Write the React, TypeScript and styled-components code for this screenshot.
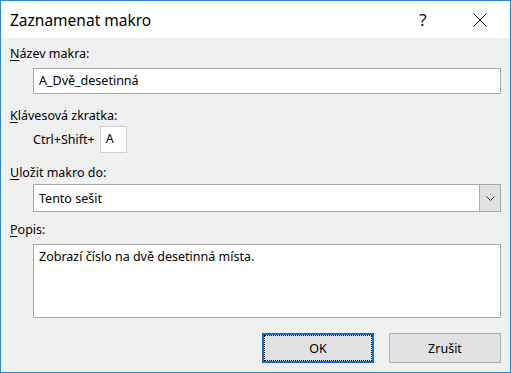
import styled, { createGlobalStyle } from "styled-components";

const GlobalStyle = createGlobalStyle`
  html, body {
    margin: 0;
    padding: 0;
    background: #f0f0f0;
  }
  body {
    font-family: "Noto Sans", "Open Sans", sans-serif;
    font-size: 12.5px;
    color: #000;
  }
`;

const Window = styled.div`
  width: 511px;
  height: 373px;
  box-sizing: border-box;
  border: 1px solid #2b88d8;
  background: #f0f0f0;
  display: flex;
  flex-direction: column;
`;

const TitleBar = styled.div`
  height: 37px;
  background: #fff;
  display: flex;
  align-items: center;
  padding: 0 7px 0 9px;
  flex-shrink: 0;
`;

const Title = styled.div`
  flex: 1;
  font-size: 15.5px;
  color: #000;
  margin-top: 1px;
`;

const TitleButton = styled.div<{ $width: number }>`
  width: ${({ $width }) => $width}px;
  height: 37px;
  display: flex;
  align-items: center;
  justify-content: center;
  font-size: 17px;
  color: #111;
`;

const Body = styled.div`
  flex: 1;
  display: flex;
  flex-direction: column;
  padding: 8px 9px 0 9px;
`;

const Label = styled.div<{ $top: number }>`
  height: 16px;
  line-height: 16px;
  margin-top: ${({ $top }) => $top}px;
  u {
    text-decoration: underline;
    text-underline-offset: 2px;
  }
`;

const Indented = styled.div<{ $top: number }>`
  margin-left: 23px;
  margin-top: ${({ $top }) => $top}px;
`;

const TextBox = styled.div<{ $height: number }>`
  height: ${({ $height }) => $height}px;
  box-sizing: border-box;
  border: 1px solid #a9a9a9;
  background: #fff;
  padding: 4px 5px;
  line-height: 16px;
`;

const ShortcutRow = styled.div`
  display: flex;
  align-items: center;
  gap: 5px;
`;

const KeyBox = styled.div`
  width: 27px;
  height: 27px;
  box-sizing: border-box;
  border: 1px solid #d0d0d0;
  background: #fff;
  padding: 4px 5px;
  line-height: 16px;
`;

const Select = styled.div`
  height: 28px;
  box-sizing: border-box;
  border: 1px solid #a9a9a9;
  background: #fff;
  display: flex;
  align-items: center;
`;

const SelectText = styled.div`
  flex: 1;
  padding-left: 5px;
`;

const DropButton = styled.div`
  width: 21px;
  height: 26px;
  box-sizing: border-box;
  border-left: 1px solid #a9a9a9;
  background: #e1e1e1;
  display: flex;
  align-items: center;
  justify-content: center;
`;

const Footer = styled.div`
  display: flex;
  justify-content: flex-end;
  gap: 15px;
  margin-top: 15px;
`;

const Button = styled.div<{ $focused?: boolean }>`
  width: 112px;
  height: 30px;
  box-sizing: border-box;
  background: #e1e1e1;
  border: ${({ $focused }) =>
    $focused ? "2px solid #0f6fc6" : "1px solid #adadad"};
  padding: ${({ $focused }) => ($focused ? "1px" : "2px")};
  display: flex;
`;

const ButtonFace = styled.div<{ $focused?: boolean }>`
  flex: 1;
  display: flex;
  align-items: center;
  justify-content: center;
  outline: ${({ $focused }) => ($focused ? "1px dotted #000" : "none")};
`;

export default function App() {
  return (
    <>
      <GlobalStyle />
      <Window>
        <TitleBar>
          <Title>Zaznamenat makro</Title>
          <TitleButton $width={68}>?</TitleButton>
          <TitleButton $width={46}>
            <svg width="14" height="14" viewBox="0 0 14 14">
              <path
                d="M0.5 0.5 L13.5 13.5 M13.5 0.5 L0.5 13.5"
                stroke="#111"
                strokeWidth="1"
                fill="none"
              />
            </svg>
          </TitleButton>
        </TitleBar>
        <Body>
          <Label $top={0}>
            <u>N</u>ázev makra:
          </Label>
          <Indented $top={6}>
            <TextBox $height={26}>A_Dvě_desetinná</TextBox>
          </Indented>
          <Label $top={14}>
            <u>K</u>lávesová zkratka:
          </Label>
          <Indented $top={2}>
            <ShortcutRow>
              <span>Ctrl+Shift+</span>
              <KeyBox>A</KeyBox>
            </ShortcutRow>
          </Indented>
          <Label $top={12}>
            <u>U</u>ložit makro do:
          </Label>
          <Indented $top={3}>
            <Select>
              <SelectText>Tento sešit</SelectText>
              <DropButton>
                <svg width="9" height="5" viewBox="0 0 9 5">
                  <path d="M0.5 0.5 L4.5 4.5 L8.5 0.5" stroke="#333" fill="none" />
                </svg>
              </DropButton>
            </Select>
          </Indented>
          <Label $top={10}>
            <u>P</u>opis:
          </Label>
          <Indented $top={6}>
            <TextBox $height={74}>Zobrazí číslo na dvě desetinná místa.</TextBox>
          </Indented>
          <Footer>
            <Button $focused>
              <ButtonFace $focused>OK</ButtonFace>
            </Button>
            <Button>
              <ButtonFace>Zrušit</ButtonFace>
            </Button>
          </Footer>
        </Body>
      </Window>
    </>
  );
}
